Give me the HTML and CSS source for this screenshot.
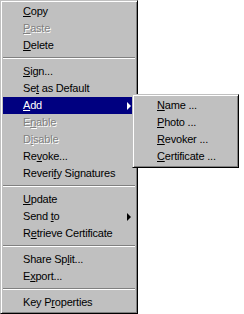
FILE: index.html
```html
<!DOCTYPE html>
<html>

<head>
    <meta charset="utf-8">
    <title>Key context menu</title>
    <link rel="stylesheet" href="styles.css">
</head>

<body>
    <div class="menu main-menu">
        <div class="item"><u>C</u>opy</div>
        <div class="item disabled"><u>P</u>aste</div>
        <div class="item"><u>D</u>elete</div>
        <div class="sep"></div>
        <div class="item"><u>S</u>ign...</div>
        <div class="item">Se<u>t</u> as Default</div>
        <div class="item active has-sub"><u>A</u>dd<span class="arrow"></span></div>
        <div class="item disabled">E<u>n</u>able</div>
        <div class="item disabled">D<u>i</u>sable</div>
        <div class="item">Re<u>v</u>oke...</div>
        <div class="item">Reveri<u>f</u>y Signatures</div>
        <div class="sep"></div>
        <div class="item"><u>U</u>pdate</div>
        <div class="item has-sub">Send <u>t</u>o<span class="arrow"></span></div>
        <div class="item">R<u>e</u>trieve Certificate</div>
        <div class="sep"></div>
        <div class="item">Share Sp<u>l</u>it...</div>
        <div class="item">E<u>x</u>port...</div>
        <div class="sep"></div>
        <div class="item">Key P<u>r</u>operties</div>
    </div>

    <div class="menu sub-menu">
        <div class="item"><u>N</u>ame ...</div>
        <div class="item"><u>P</u>hoto ...</div>
        <div class="item"><u>R</u>evoker ...</div>
        <div class="item"><u>C</u>ertificate ...</div>
    </div>
</body>

</html>
```

FILE: styles.css
```css
body {
    margin: 0;
    background-color: #fff;
    font-family: "Liberation Sans", Arial, sans-serif;
    font-size: 11px;
    letter-spacing: -0.2px;
    color: #000;
}

.menu {
    box-sizing: border-box;
    background-color: #c0c0c0;
    border: 1px solid;
    border-color: #c0c0c0 #000 #000 #c0c0c0;
    box-shadow: inset 1px 1px #fff, inset -1px -1px #808080;
    padding: 2px;
}

.main-menu {
    width: 138px;
    height: 314px;
}

.sub-menu {
    position: absolute;
    left: 132px;
    top: 94px;
    width: 107px;
    height: 74px;
}

.item {
    position: relative;
    height: 17px;
    line-height: 17px;
    padding-left: 20px;
    white-space: nowrap;
}

.sub-menu .item {
    padding-left: 22px;
}

.item u {
    text-decoration: underline;
    text-underline-offset: 1px;
}

.item.active {
    background-color: #000080;
    color: #fff;
}

.item.disabled {
    color: #808080;
    text-shadow: 1px 1px #fff;
}

.arrow {
    position: absolute;
    right: 4px;
    top: 5px;
    width: 0;
    height: 0;
    border-left: 4px solid #000;
    border-top: 4px solid transparent;
    border-bottom: 4px solid transparent;
}

.item.active .arrow {
    border-left-color: #fff;
}

.sep {
    height: 9px;
    padding-top: 3px;
    box-sizing: border-box;
}

.sep::before {
    content: "";
    display: block;
    border-top: 1px solid #808080;
    border-bottom: 1px solid #fff;
}
```
